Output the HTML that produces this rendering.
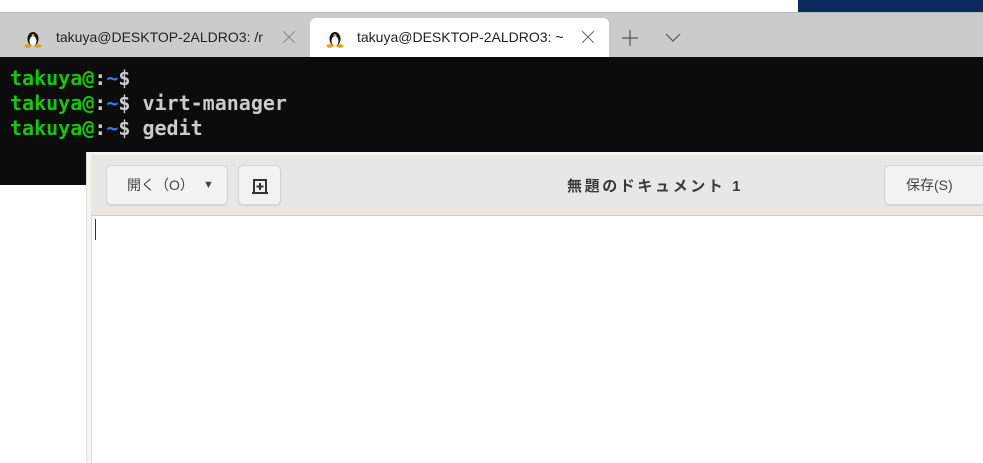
<!DOCTYPE html>
<html><head><meta charset="utf-8"><style>
*{margin:0;padding:0;box-sizing:border-box}
body{width:983px;height:463px;overflow:hidden;background:#fff;position:relative;font-family:"Liberation Sans","Noto Sans CJK JP",sans-serif}
.abs{position:absolute}
.tabbar{left:0;top:12px;width:983px;height:45px;background:#cbcbcb;border-top:1px solid #b8b8b8}
.tab{top:18px;height:39px;font-size:14px;color:#222;line-height:39px}
.term{left:0;top:57px;width:983px;height:128px;background:#0c0c0c;font-family:"DejaVu Sans Mono","Liberation Mono",monospace;font-size:20px;font-weight:bold;line-height:25px;padding:9px 0 0 10px;color:#ccc}
.g{color:#16c60c}.b{color:#3b78ff}
.btn{background:#f3f2f1;border:1px solid #d6d3cf;border-radius:5px;box-shadow:0 1px 1px rgba(0,0,0,.08);font-size:14px;color:#444;text-align:center;line-height:38px}
</style></head><body>
<div class="abs" style="left:798px;top:0;width:185px;height:12px;background:#0b2a5e"></div>
<div class="abs tabbar"></div>
<div class="abs tab" style="left:22px;width:280px;">
<svg class="abs" style="left:2px;top:10px" width="18" height="20" viewBox="0 0 18 20"><ellipse cx="9" cy="11" rx="5.5" ry="7" fill="#111"/><ellipse cx="9" cy="13" rx="3.5" ry="5" fill="#fff"/><ellipse cx="9" cy="7" rx="1.5" ry="1" fill="#e8a000"/><ellipse cx="4" cy="18" rx="3.5" ry="1.8" fill="#e8a000"/><ellipse cx="14" cy="18" rx="3.5" ry="1.8" fill="#e8a000"/></svg>
<span class="abs" style="left:34px">takuya@DESKTOP-2ALDRO3: /r</span>
<svg class="abs" style="left:261px;top:13px" width="12" height="12"><path d="M0 0L12 12M12 0L0 12" stroke="#888" stroke-width="1"/></svg></div>
<div class="abs tab" style="left:310px;width:299px;background:#fff;border-radius:6px 6px 0 0">
<svg class="abs" style="left:16px;top:10px" width="18" height="20" viewBox="0 0 18 20"><ellipse cx="9" cy="11" rx="5.5" ry="7" fill="#111"/><ellipse cx="9" cy="13" rx="3.5" ry="5" fill="#fff"/><ellipse cx="9" cy="7" rx="1.5" ry="1" fill="#e8a000"/><ellipse cx="4" cy="18" rx="3.5" ry="1.8" fill="#e8a000"/><ellipse cx="14" cy="18" rx="3.5" ry="1.8" fill="#e8a000"/></svg>
<span class="abs" style="left:47px">takuya@DESKTOP-2ALDRO3: ~</span>
<svg class="abs" style="left:272px;top:13px" width="12" height="12"><path d="M0 0L12 12M12 0L0 12" stroke="#666" stroke-width="1"/></svg></div>
<svg class="abs" style="left:622px;top:30px" width="16" height="16"><path d="M8 0V16M0 8H16" stroke="#555" stroke-width="1.2"/></svg>
<svg class="abs" style="left:665px;top:33px" width="16" height="10"><path d="M1 1L8 8L15 1" stroke="#555" stroke-width="1.2" fill="none"/></svg>
<div class="abs term">
<div><span class="g">takuya@</span>:<span class="b">~</span>$</div>
<div><span class="g">takuya@</span>:<span class="b">~</span>$ virt-manager</div>
<div><span class="g">takuya@</span>:<span class="b">~</span>$ gedit</div>
</div>
<div class="abs" style="left:86px;top:152px;width:897px;height:311px;background:#f4f4f4;border-left:1px solid #e0e0e0"></div>
<div class="abs" style="left:91px;top:155px;width:892px;height:61px;background:#e9e7e4;border-bottom:1px solid #cfccc8"></div>
<div class="abs" style="left:91px;top:216px;width:892px;height:247px;background:#fff;border-left:1px solid #ddd"></div>
<div class="abs" style="left:95px;top:219px;width:1px;height:21px;background:#333"></div>
<div class="abs btn" style="left:106px;top:165px;width:122px;height:40px;text-align:left;padding-left:20px">開く（O）<span class="abs" style="left:96px;top:0;font-size:11px">▼</span></div>
<div class="abs btn" style="left:238px;top:165px;width:43px;height:40px">
<svg style="margin-top:11px" width="18" height="18" viewBox="0 0 18 18"><path d="M3 16V3h12v13M1 16h16" stroke="#333" stroke-width="2" fill="none"/><path d="M9 6v7M5.5 9.5h7" stroke="#333" stroke-width="2"/></svg></div>
<div class="abs" style="left:567px;top:175px;font-size:15px;font-weight:bold;color:#3a3a3a;letter-spacing:2.6px">無題のドキュメント 1</div>
<div class="abs btn" style="left:884px;top:165px;width:110px;height:40px;text-align:left;padding-left:21px">保存(S)</div>
</body></html>
